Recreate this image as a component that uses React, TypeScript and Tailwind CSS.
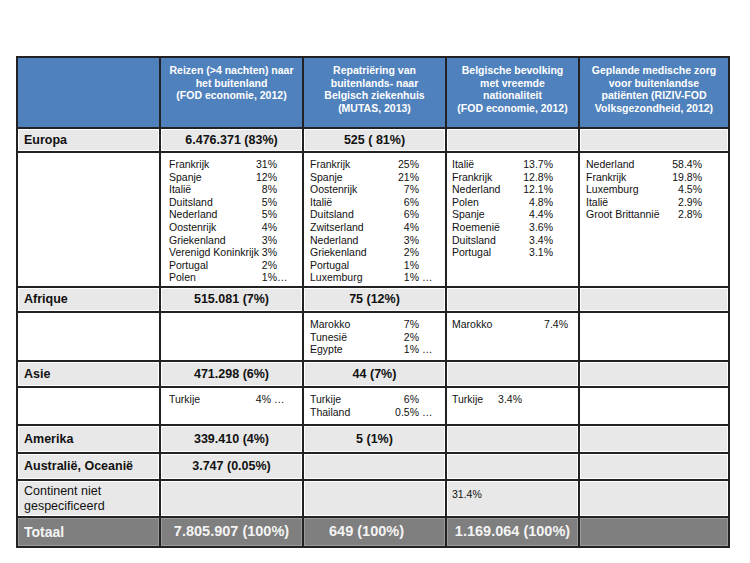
import React from "react";

type Line = { name: string; value: string; suffix?: string };

type DetailCell = { lines: Line[]; pad: string; w: string };

const headers = [
  ["Reizen (>4 nachten) naar", "het buitenland", "(FOD economie, 2012)"],
  ["Repatriëring van", "buitenlands- naar", "Belgisch ziekenhuis", "(MUTAS, 2013)"],
  ["Belgische bevolking", "met vreemde", "nationaliteit", "(FOD economie, 2012)"],
  ["Geplande medische zorg", "voor buitenlandse", "patiënten (RIZIV-FOD", "Volksgezondheid, 2012)"],
];

const europa: DetailCell[] = [
  {
    pad: "pl-2",
    w: "w-[108px]",
    lines: [
      { name: "Frankrijk", value: "31%" },
      { name: "Spanje", value: "12%" },
      { name: "Italië", value: "8%" },
      { name: "Duitsland", value: "5%" },
      { name: "Nederland", value: "5%" },
      { name: "Oostenrijk", value: "4%" },
      { name: "Griekenland", value: "3%" },
      { name: "Verenigd Koninkrijk", value: "3%" },
      { name: "Portugal", value: "2%" },
      { name: "Polen", value: "1%", suffix: "…" },
    ],
  },
  {
    pad: "pl-1.5",
    w: "w-[109px]",
    lines: [
      { name: "Frankrijk", value: "25%" },
      { name: "Spanje", value: "21%" },
      { name: "Oostenrijk", value: "7%" },
      { name: "Italië", value: "6%" },
      { name: "Duitsland", value: "6%" },
      { name: "Zwitserland", value: "4%" },
      { name: "Nederland", value: "3%" },
      { name: "Griekenland", value: "2%" },
      { name: "Portugal", value: "1%" },
      { name: "Luxemburg", value: "1%", suffix: " …" },
    ],
  },
  {
    pad: "pl-[5px]",
    w: "w-[101px]",
    lines: [
      { name: "Italië", value: "13.7%" },
      { name: "Frankrijk", value: "12.8%" },
      { name: "Nederland", value: "12.1%" },
      { name: "Polen", value: "4.8%" },
      { name: "Spanje", value: "4.4%" },
      { name: "Roemenië", value: "3.6%" },
      { name: "Duitsland", value: "3.4%" },
      { name: "Portugal", value: "3.1%" },
    ],
  },
  {
    pad: "pl-1.5",
    w: "w-[116px]",
    lines: [
      { name: "Nederland", value: "58.4%" },
      { name: "Frankrijk", value: "19.8%" },
      { name: "Luxemburg", value: "4.5%" },
      { name: "Italië", value: "2.9%" },
      { name: "Groot Brittannië", value: "2.8%" },
    ],
  },
];

const afrique: DetailCell[] = [
  { pad: "pl-2", w: "w-[106px]", lines: [] },
  {
    pad: "pl-1.5",
    w: "w-[109px]",
    lines: [
      { name: "Marokko", value: "7%" },
      { name: "Tunesië", value: "2%" },
      { name: "Egypte", value: "1%", suffix: " …" },
    ],
  },
  { pad: "pl-[5px]", w: "w-[116px]", lines: [{ name: "Marokko", value: "7.4%" }] },
  { pad: "pl-1.5", w: "w-[116px]", lines: [] },
];

const asie: DetailCell[] = [
  { pad: "pl-2", w: "w-[102px]", lines: [{ name: "Turkije", value: "4%", suffix: " …" }] },
  {
    pad: "pl-1.5",
    w: "w-[109px]",
    lines: [
      { name: "Turkije", value: "6%" },
      { name: "Thailand", value: "0.5%", suffix: " …" },
    ],
  },
  { pad: "pl-[5px]", w: "w-[70px]", lines: [{ name: "Turkije", value: "3.4%" }] },
  { pad: "pl-1.5", w: "w-[116px]", lines: [] },
];

function Detail({ cell }: { cell: DetailCell }) {
  return (
    <div className={`bg-white pt-[5px] text-[10.5px] leading-[12.6px] text-[#111] ${cell.pad}`}>
      {cell.lines.map((line) => (
        <div key={line.name} className="flex">
          <div className={`flex justify-between ${cell.w}`}>
            <span>{line.name}</span>
            <span>{line.value}</span>
          </div>
          {line.suffix && <span className="whitespace-pre">{line.suffix}</span>}
        </div>
      ))}
    </div>
  );
}

function SummaryRow({ label, values }: { label: string; values: string[] }) {
  return (
    <>
      <div className="flex items-center border border-white bg-[#e8e8e8] pl-[5px] text-[12.5px] font-bold">
        {label}
      </div>
      {[0, 1, 2, 3].map((i) => (
        <div
          key={i}
          className="flex items-center justify-center border border-white bg-[#e8e8e8] text-[12.5px] font-bold"
        >
          {values[i] ?? ""}
        </div>
      ))}
    </>
  );
}

export default function App() {
  return (
    <div className="h-[563px] w-[750px] bg-white pl-[16px] pt-[56px] font-['Liberation_Sans',Arial,sans-serif] text-[#111]">
      <div className="grid w-fit grid-cols-[141px_141px_141px_131px_148px] grid-rows-[69px_22px_133px_23px_47px_24px_36px_26px_25px_35px_28px] gap-[2px] bg-[#222] p-[2px]">
        {/* Header */}
        <div className="bg-[#4f81bd]" />
        {headers.map((lines, i) => (
          <div
            key={i}
            className="bg-[#4f81bd] pt-[6px] text-center text-[10.5px] font-bold leading-[12.5px] text-white"
          >
            {lines.map((l) => (
              <div key={l}>{l}</div>
            ))}
          </div>
        ))}

        {/* Europa */}
        <SummaryRow label="Europa" values={["6.476.371 (83%)", "525 ( 81%)"]} />
        <div className="bg-white" />
        {europa.map((cell, i) => (
          <Detail key={i} cell={cell} />
        ))}

        {/* Afrique */}
        <SummaryRow label="Afrique" values={["515.081 (7%)", "75 (12%)"]} />
        <div className="bg-white" />
        {afrique.map((cell, i) => (
          <Detail key={i} cell={cell} />
        ))}

        {/* Asie */}
        <SummaryRow label="Asie" values={["471.298 (6%)", "44 (7%)"]} />
        <div className="bg-white" />
        {asie.map((cell, i) => (
          <Detail key={i} cell={cell} />
        ))}

        <SummaryRow label="Amerika" values={["339.410 (4%)", "5 (1%)"]} />
        <SummaryRow label="Australië, Oceanië" values={["3.747 (0.05%)"]} />

        {/* Continent niet gespecificeerd */}
        <div className="flex items-center border border-white bg-[#e8e8e8] pl-[5px] text-[12.5px] leading-[15px]">
          Continent niet
          <br />
          gespecificeerd
        </div>
        <div className="border border-white bg-[#e8e8e8]" />
        <div className="border border-white bg-[#e8e8e8]" />
        <div className="border border-white bg-[#e8e8e8] pl-[4px] pt-[5px] text-[10.5px]">31.4%</div>
        <div className="border border-white bg-[#e8e8e8]" />

        {/* Totaal */}
        <div className="flex items-center border border-[#9a9a9a] bg-[#7f7f7f] pl-[5px] text-[14px] font-bold text-[#f4f4f4]">
          Totaal
        </div>
        <div className="flex items-center justify-center border border-[#9a9a9a] bg-[#7f7f7f] text-[14.5px] font-bold text-[#f4f4f4]">
          7.805.907 (100%)
        </div>
        <div className="flex items-center justify-center border border-[#9a9a9a] bg-[#7f7f7f] pr-4 text-[14.5px] font-bold text-[#f4f4f4]">
          649 (100%)
        </div>
        <div className="flex items-center justify-center border border-[#9a9a9a] bg-[#7f7f7f] text-[14.5px] font-bold text-[#f4f4f4]">
          1.169.064 (100%)
        </div>
        <div className="border border-[#9a9a9a] bg-[#7f7f7f]" />
      </div>
    </div>
  );
}
